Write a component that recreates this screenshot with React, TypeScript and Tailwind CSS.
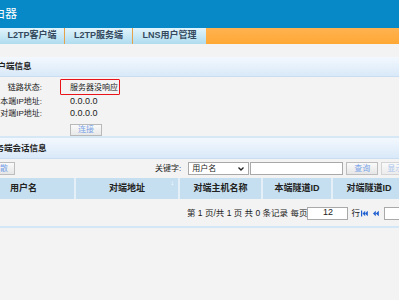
import React from "react";

const font = { fontFamily: '"Liberation Sans","Noto Sans CJK SC",sans-serif' };

function FirstIcon() {
  return (
    <svg width="7" height="7" viewBox="0 0 7 7">
      <rect x="0" y="0.5" width="1.2" height="6" fill="#1f5fd0" />
      <polygon points="1.5,3.5 4.2,0.8 4.2,6.2" fill="#1f5fd0" />
      <polygon points="4,3.5 6.8,0.8 6.8,6.2" fill="#1f5fd0" />
    </svg>
  );
}
function PrevIcon() {
  return (
    <svg width="6" height="7" viewBox="0 0 6 7">
      <polygon points="0,3.5 2.8,0.8 2.8,6.2" fill="#1f5fd0" />
      <polygon points="2.8,3.5 5.8,0.8 5.8,6.2" fill="#1f5fd0" />
    </svg>
  );
}

export default function App() {
  return (
    <div className="w-[399px] h-[300px] overflow-hidden bg-[#f3f3f3] text-[#222]" style={font}>
      {/* header */}
      <div className="h-[28px] bg-[#0689c6] flex items-center overflow-hidden">
        <span className="ml-[-19px] text-white text-[12px] whitespace-nowrap leading-none">路由器</span>
      </div>
      {/* tabs */}
      <div className="h-[16px] flex">
        <div className="w-[65px] shrink-0 bg-gradient-to-b from-[#e2f4fb] to-[#aedcef] border-r border-[#e4a24a] flex items-center justify-center text-[9px] font-bold text-[#34495e]">L2TP客户端</div>
        <div className="w-[68px] shrink-0 bg-gradient-to-b from-[#e2f4fb] to-[#aedcef] border-r border-[#e4a24a] flex items-center justify-center text-[9px] font-bold text-[#34495e]">L2TP服务端</div>
        <div className="w-[73px] shrink-0 bg-gradient-to-b from-[#e2f4fb] to-[#aedcef] flex items-center justify-center text-[9px] font-bold text-[#34495e]">LNS用户管理</div>
        <div className="flex-1 bg-gradient-to-b from-[#ffb24f] to-[#ffa834]" />
      </div>
      <div className="h-[13px]" />
      {/* section 1 header */}
      <div className="h-[20px] bg-gradient-to-b from-[#f3f8fe] to-[#d9e9f8] border-b border-[#c9def2] flex items-center overflow-hidden">
        <span className="ml-[-11px] text-[8.5px] font-bold text-[#222] whitespace-nowrap">客户端信息</span>
      </div>
      {/* section 1 content */}
      <div className="h-[59px] pt-[3px] text-[8px]">
        <div className="flex h-[15px] items-center">
          <div className="w-[42px] shrink-0 flex justify-end overflow-hidden whitespace-nowrap">链路状态:</div>
          <div className="ml-[28px] relative whitespace-nowrap">
            服务器没响应
            <div className="absolute left-[-10px] top-[-3px] w-[60px] h-[16px] border-[1.5px] border-[#e8141a] rounded-[1px]" />
          </div>
        </div>
        <div className="flex h-[13px] items-center">
          <div className="w-[42px] shrink-0 flex justify-end overflow-hidden whitespace-nowrap">本端IP地址:</div>
          <div className="ml-[28px] text-[9px] whitespace-nowrap">0.0.0.0</div>
        </div>
        <div className="flex h-[12px] items-center">
          <div className="w-[42px] shrink-0 flex justify-end overflow-hidden whitespace-nowrap">对端IP地址:</div>
          <div className="ml-[28px] text-[9px] whitespace-nowrap">0.0.0.0</div>
        </div>
        <div className="flex mt-[4px]">
          <div className="ml-[70px] w-[32px] h-[12px] border border-[#b9b9b9] bg-gradient-to-b from-[#fafafa] to-[#e8e8e8] flex items-center justify-center text-[8px] text-[#7aa3e6]">连接</div>
        </div>
      </div>
      {/* section 2 header */}
      <div className="border-t-2 border-[#d6e7f6] h-[23px] bg-gradient-to-b from-[#f3f8fe] to-[#d9e9f8] border-b border-b-[#c9def2] flex items-center overflow-hidden">
        <span className="ml-[-13px] text-[8.5px] font-bold text-[#222] whitespace-nowrap">服务端会话信息</span>
      </div>
      {/* toolbar */}
      <div className="h-[19px] flex items-center text-[8px]">
        <div className="ml-[-25px] w-[40px] h-[13px] shrink-0 border border-[#bdbdbd] bg-gradient-to-b from-[#fafafa] to-[#e6e6e6] flex items-center justify-end pr-[6px] text-[#7aa3e6] whitespace-nowrap">解散</div>
        <div className="ml-[140px] whitespace-nowrap shrink-0">关键字:</div>
        <div className="ml-[7px] w-[61px] h-[13px] shrink-0 bg-white border border-[#a9a9a9] flex items-center justify-between pl-[3px] pr-[4px]">
          <span>用户名</span>
          <svg width="6" height="4" viewBox="0 0 6 4"><path d="M0.5 0.5 L3 3 L5.5 0.5" stroke="#222" strokeWidth="1.3" fill="none" /></svg>
        </div>
        <div className="ml-[1px] w-[93px] h-[13px] shrink-0 bg-white border border-[#a9a9a9]" />
        <div className="ml-[3px] w-[32px] h-[13px] shrink-0 border border-[#bdbdbd] bg-gradient-to-b from-[#fafafa] to-[#e6e6e6] flex items-center justify-center text-[#7aa3e6]">查询</div>
        <div className="ml-[3px] w-[34px] h-[13px] shrink-0 border border-[#d4d4d4] bg-gradient-to-b from-[#fafafa] to-[#ececec] flex items-center pl-[5px] text-[#a8c2ec] whitespace-nowrap">显示</div>
      </div>
      {/* table header */}
      <div className="h-[21px] bg-[#c6dff0] flex text-[9px] font-bold text-[#222] whitespace-nowrap">
        <div className="w-[76px] shrink-0 border-r-2 border-[#e4eff8] flex items-center pl-[10px]">用户名</div>
        <div className="w-[104px] shrink-0 border-r-2 border-[#e4eff8] flex items-center justify-center relative">
          对端地址
          <span className="absolute right-[4px] top-[0px] text-[7px] text-white font-normal">↓</span>
        </div>
        <div className="w-[83px] shrink-0 border-r-2 border-[#e4eff8] flex items-center justify-center">对端主机名称</div>
        <div className="w-[70px] shrink-0 border-r-2 border-[#e4eff8] flex items-center justify-center">本端隧道ID</div>
        <div className="w-[72px] shrink-0 flex items-center justify-center">对端隧道ID</div>
      </div>
      {/* pagination */}
      <div className="h-[27px] pt-[7px] flex items-start text-[8.5px] whitespace-nowrap">
        <div className="flex items-center h-[14px]">
          <span className="ml-[187px] shrink-0">第 1 页/共 1 页 共 0 条记录 每页</span>
        </div>
        <div className="ml-auto flex items-center h-[14px] shrink-0 mr-[-20px]">
          <div className="w-[41px] h-[13px] bg-white border border-[#a9a9a9] flex items-center justify-center text-[9px]">12</div>
          <span className="ml-[3px]">行</span>
          <span className="ml-[1px] flex items-center"><FirstIcon /></span>
          <span className="ml-[5px] flex items-center"><PrevIcon /></span>
          <div className="ml-[5px] w-[36px] h-[13px] bg-white border border-[#a9a9a9]" />
        </div>
      </div>
      <div className="h-[2px] bg-[#d4e7f6]" />
    </div>
  );
}
